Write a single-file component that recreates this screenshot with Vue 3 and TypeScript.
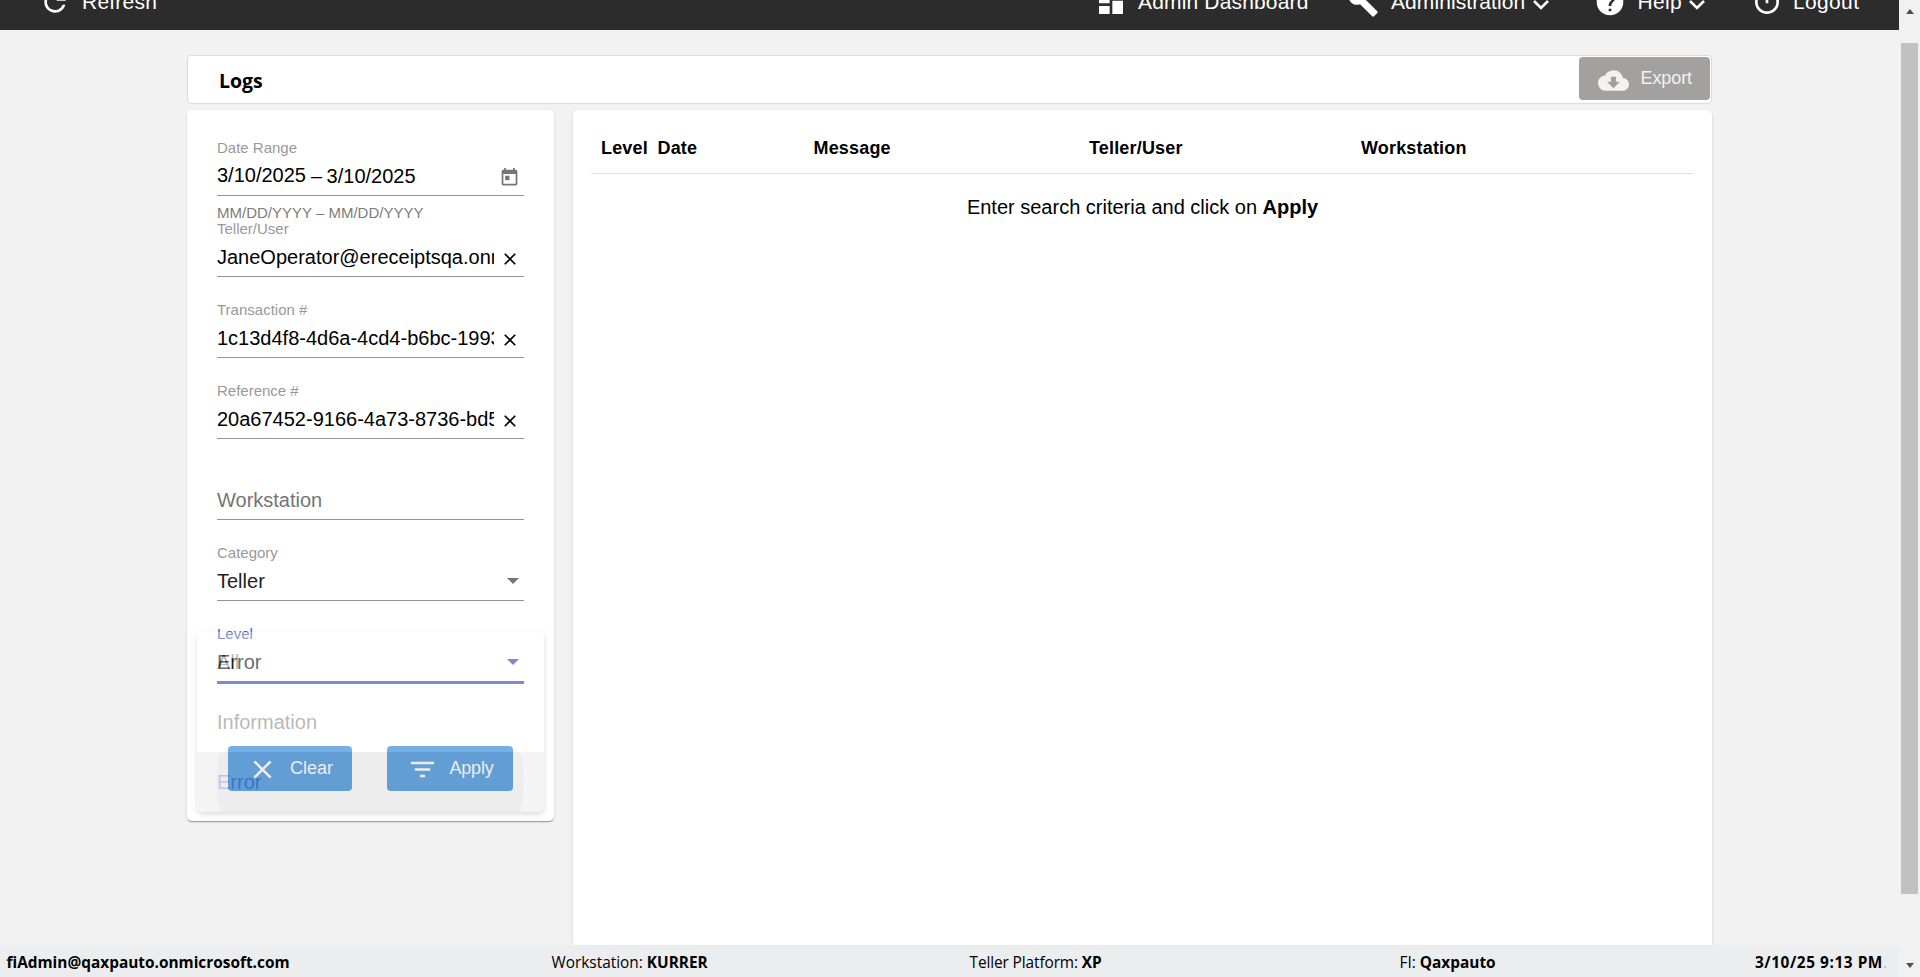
<script setup lang="ts">
interface Field {
  id: string
  label: string
  value: string
  kind: 'range' | 'text' | 'empty' | 'select'
  active?: boolean
}

const fields: Field[] = [
  { id: 'range', label: 'Date Range', value: '3/10/2025', kind: 'range' },
  { id: 'teller', label: 'Teller/User', value: 'JaneOperator@ereceiptsqa.onmicrosoft.com', kind: 'text' },
  { id: 'transaction', label: 'Transaction #', value: '1c13d4f8-4d6a-4cd4-b6bc-1993', kind: 'text' },
  { id: 'reference', label: 'Reference #', value: '20a67452-9166-4a73-8736-bd5', kind: 'text' },
  { id: 'workstation', label: '', value: 'Workstation', kind: 'empty' },
  { id: 'category', label: 'Category', value: 'Teller', kind: 'select' },
  { id: 'level', label: 'Level', value: 'Error', kind: 'select', active: true },
]

const columns: string[] = ['Level', 'Date', 'Message', 'Teller/User', 'Workstation']
const levels: string[] = ['All', 'Information', 'Error']
const selectedLevel = 'Error'
</script>

<template>
  <div class="window">
    <div class="page">
      <nav class="topbar">
        <a class="nav-item refresh">
          <svg class="nav-icon" viewBox="0 0 24 24"><path d="M17.65 6.35C16.2 4.9 14.21 4 12 4c-4.42 0-7.99 3.58-7.99 8s3.57 8 7.99 8c3.73 0 6.84-2.55 7.73-6h-2.08c-.82 2.33-3.04 4-5.65 4-3.31 0-6-2.69-6-6s2.69-6 6-6c1.66 0 3.14.69 4.22 1.78L13 11h7V4l-2.35 2.35z" /></svg>
          <span>Refresh</span>
        </a>
        <a class="nav-item dashboard">
          <svg class="nav-icon" viewBox="0 0 24 24"><path d="M3 13h8V3H3v10zm0 8h8v-6H3v6zm10 0h8V11h-8v10zm0-18v6h8V3h-8z" /></svg>
          <span>Admin Dashboard</span>
        </a>
        <a class="nav-item administration">
          <svg class="nav-icon" viewBox="0 0 24 24"><path d="M22.7 19l-9.1-9.1c.9-2.3.4-5-1.5-6.9-2-2-5-2.4-7.4-1.3L9 6 6 9 1.6 4.7C.4 7.1.9 10.1 2.9 12.1c1.9 1.9 4.6 2.4 6.9 1.5l9.1 9.1c.4.4 1 .4 1.4 0l2.3-2.3c.5-.4.5-1.1.1-1.4z" /></svg>
          <span>Administration</span>
          <svg class="chevron" viewBox="0 0 18 12"><path d="M2 2l7 7 7-7" /></svg>
        </a>
        <a class="nav-item help">
          <svg class="nav-icon" viewBox="0 0 24 24"><path d="M12 2C6.48 2 2 6.48 2 12s4.48 10 10 10 10-4.48 10-10S17.52 2 12 2zm1 17h-2v-2h2v2zm2.07-7.75l-.9.92C13.45 12.9 13 13.5 13 15h-2v-.5c0-1.1.45-2.1 1.17-2.83l1.24-1.26c.37-.36.59-.86.59-1.41 0-1.1-.9-2-2-2s-2 .9-2 2H8c0-2.21 1.79-4 4-4s4 1.79 4 4c0 .88-.36 1.68-.93 2.25z" /></svg>
          <span>Help</span>
          <svg class="chevron" viewBox="0 0 18 12"><path d="M2 2l7 7 7-7" /></svg>
        </a>
        <a class="nav-item logout">
          <svg class="nav-icon" viewBox="0 0 24 24"><path d="M13 3h-2v10h2V3zm4.83 2.17l-1.42 1.42C17.99 7.86 19 9.81 19 12c0 3.87-3.13 7-7 7s-7-3.13-7-7c0-2.19 1.01-4.14 2.58-5.42L6.17 5.17C4.23 6.82 3 9.26 3 12c0 4.97 4.03 9 9 9s9-4.03 9-9c0-2.74-1.23-5.18-3.17-6.83z" /></svg>
          <span>Logout</span>
        </a>
      </nav>

      <main class="content">
        <header class="title-bar">
          <h1>Logs</h1>
          <button class="export">
            <svg viewBox="0 0 24 24"><path d="M19.35 10.04C18.67 6.59 15.64 4 12 4 9.11 4 6.6 5.64 5.35 8.04 2.34 8.36 0 10.91 0 14c0 3.31 2.69 6 6 6h13c2.76 0 5-2.24 5-5 0-2.64-2.05-4.78-4.65-4.96zM17 13l-5 5-5-5h3V9h4v4h3z" /></svg>
            <span>Export</span>
          </button>
        </header>

        <div class="columns">
          <aside class="card filters">
            <template v-for="f in fields" :key="f.id">
              <div class="field" :class="[f.kind, { active: f.active }]">
                <label>{{ f.label }}</label>
                <div class="control">
                  <div v-if="f.kind === 'range'" class="value range-value">
                    <span class="start">{{ f.value }}</span><span class="dash">–</span><span>{{ f.value }}</span>
                  </div>
                  <div v-else class="value">{{ f.value }}</div>
                  <svg v-if="f.kind === 'range'" class="calendar" viewBox="0 0 24 24"><path d="M19 3h-1V1h-2v2H8V1H6v2H5c-1.11 0-1.99.9-1.99 2L3 19c0 1.1.89 2 2 2h14c1.1 0 2-.9 2-2V5c0-1.1-.9-2-2-2zm0 16H5V8h14v11zM7 10h5v5H7z" /></svg>
                  <svg v-if="f.kind === 'text'" class="reset" viewBox="0 0 24 24"><path d="M19 6.41L17.59 5 12 10.59 6.41 5 5 6.41 10.59 12 5 17.59 6.41 19 12 13.41 17.59 19 19 17.59 13.41 12z" /></svg>
                  <i v-if="f.kind === 'select'" class="arrow"></i>
                </div>
              </div>
              <div v-if="f.kind === 'range'" class="hint">MM/DD/YYYY – MM/DD/YYYY</div>
            </template>
            <div class="actions">
              <button class="action clear">
                <svg viewBox="0 0 24 24"><path d="M19 6.41L17.59 5 12 10.59 6.41 5 5 6.41 10.59 12 5 17.59 6.41 19 12 13.41 17.59 19 19 17.59 13.41 12z" /></svg>
                <span>Clear</span>
              </button>
              <button class="action apply">
                <svg viewBox="0 0 24 24"><path d="M10 18h4v-2h-4v2zM3 6v2h18V6H3zm3 7h12v-2H6v2z" /></svg>
                <span>Apply</span>
              </button>
            </div>
            <!-- level options, part-way through the fade -->
            <div class="menu">
              <div v-for="l in levels" :key="l" class="option" :class="{ selected: l === selectedLevel }">{{ l }}</div>
            </div>
          </aside>

          <section class="card results">
            <div class="head">
              <span v-for="c in columns" :key="c">{{ c }}</span>
            </div>
            <p class="empty-text">Enter search criteria and click on <b>Apply</b></p>
          </section>
        </div>
      </main>

      <footer class="status">
        <span><b>fiAdmin@qaxpauto.onmicrosoft.com</b></span>
        <span>Workstation: <b>KURRER</b></span>
        <span class="platform">Teller Platform: <b>XP</b></span>
        <span>FI: <b>Qaxpauto</b></span>
        <span class="time"><b>3/10/25 9:13 PM</b><span class="dot">.</span></span>
      </footer>
    </div>

    <div class="scrollbar">
      <i class="up"></i>
      <div class="thumb"></div>
      <i class="down"></i>
    </div>
  </div>
</template>

<style>
html, body { overflow: hidden; }
</style>

<style scoped>
* { box-sizing: border-box; }
.window {
  display: flex;
  width: 1920px;
  height: 977px;
  overflow: hidden;
  background: #f2f2f2;
  color: #000;
  font-family: "Liberation Sans", Arial, sans-serif;
  font-size: 20px;
}
.page { display: flex; flex-direction: column; width: 1899px; height: 977px; }

.topbar {
  display: flex;
  flex: none;
  align-items: flex-start;
  height: 44px;
  margin-top: -14px;
  background: #2c2c2c;
  color: #fff;
}
.nav-item { display: flex; flex: none; white-space: nowrap; line-height: 32px; font-size: 21px; }
.nav-icon { flex: none; width: 32px; height: 32px; fill: #fff; }
.nav-item span { margin-left: 10px; }
.chevron { flex: none; width: 18px; height: 12px; margin: 13px 0 0 6.5px; fill: none; stroke: #fff; stroke-width: 2.6; }
.refresh { width: 1056px; padding-left: 39px; letter-spacing: 0.22px; }
.dashboard { width: 291px; padding-left: 39px; letter-spacing: 0.16px; }
.administration { width: 247px; letter-spacing: 0.08px; }
.help { width: 157px; letter-spacing: 0.3px; }
.logout { letter-spacing: 0.35px; }
.refresh span { margin-left: 11px; }
.dashboard span { margin-left: 11px; }
.help span { margin-left: 11.5px; }
.administration span { margin-left: 12px; }

.content { flex: 1; min-height: 0; width: 1525px; margin-left: 187px; padding-top: 25px; }
.title-bar {
  display: flex;
  justify-content: space-between;
  height: 49px;
  padding: 1px 1px 0 31px;
  border: 1px solid #dcdcdc;
  border-radius: 4px;
  background: #fff;
}
h1 { margin: 8px 0 0; font: 700 19.5px/32px "Segoe UI", "Open Sans", "Noto Sans", sans-serif; }
.export, .action {
  display: flex;
  align-items: flex-start;
  border: 0;
  padding: 0;
  border-radius: 4px;
  font-family: inherit;
  font-size: 18px;
  line-height: 24px;
  color: #fff;
}
.export { width: 131px; height: 43px; padding: 8px 0 0 19px; background: #a3a19f; color: #f2f2f2; }
.export svg { width: 31px; height: 31px; fill: #f2f2f2; }
.export span { margin: 1px 0 0 11.5px; letter-spacing: -0.1px; }

.columns { display: flex; gap: 19px; margin-top: 6px; height: 900px; align-items: flex-start; }
.card {
  background: #fff;
  border-radius: 5px;
  box-shadow: 0 2px 1px -1px rgba(0, 0, 0, 0.2), 0 1px 1px rgba(0, 0, 0, 0.14), 0 1px 3px rgba(0, 0, 0, 0.12);
}
.filters { position: relative; width: 367px; height: 711px; padding: 5px 30px 0; }
.results { width: 1139px; height: 900px; padding: 0 18px; }

.field { height: 81px; padding-top: 23px; border-bottom: 1px solid #949494; white-space: nowrap; }
.field label { display: block; height: 20px; line-height: 20px; font-size: 15px; color: #999; }
.control { display: flex; height: 36px; padding-top: 6px; justify-content: space-between; }
.value { flex: 1; overflow: hidden; line-height: 24px; }
.text .value { flex: 0 0 277px; }
.empty .value { color: #757575; }
.select .value { color: #212121; }
.range-value { display: flex; }
.range-value .start { margin-top: -1px; }
.range-value .dash { margin: 0 4.5px 0 5px; }
.calendar { width: 21px; height: 21px; margin: 3px 4.5px 0 0; fill: #757575; }
.reset { width: 20px; height: 20px; margin: 4px 4.5px 0 0; }
.arrow { margin: 9px 5px 0 0; height: 6px; border: 6px solid transparent; border-top-color: #757575; border-bottom: 0; }
.hint { height: 27px; margin-bottom: -27px; padding-top: 7px; font-size: 15px; line-height: 20px; color: #7c7c7c; }
.active { height: 83px; border-bottom: 3px solid #3f51b5; }
.active label { color: #4d5dbb; }
.active .arrow { border-top-color: #3f51b5; }

.actions { display: flex; gap: 35px; padding: 62px 0 0 11px; }
.action { height: 45px; background: #3089da; }
.action svg { width: 31px; height: 31px; fill: #fff; margin-top: 8px; }
.action span { margin: 10px 0 0 12px; }
.clear { width: 124px; padding-left: 19px; }
.apply { width: 126px; padding-left: 19.5px; letter-spacing: -0.2px; }

.menu {
  position: absolute;
  left: 10px;
  top: 522px;
  width: 347px;
  height: 180px;
  border-radius: 5px;
  background: #fff;
  opacity: 0.33;
  box-shadow: 0 2px 4px -1px rgba(0, 0, 0, 0.2), 0 4px 5px rgba(0, 0, 0, 0.14), 0 1px 10px rgba(0, 0, 0, 0.12);
}
.option { height: 60px; padding-left: 20px; line-height: 60px; color: rgba(0, 0, 0, 0.87); }
.selected {
  border-radius: 0 0 5px 5px;
  color: #3f51b5;
  background: radial-gradient(circle 154px at 173px 30px, rgba(0, 0, 0, 0.1) 153px, transparent 154px), rgba(0, 0, 0, 0.12);
}

.head {
  display: grid;
  grid-template-columns: 56.5px 156px 275.5px 272px 1fr;
  height: 64px;
  padding: 26px 0 0 10px;
  border-bottom: 1px solid #e0e0e0;
  font-size: 18px;
  font-weight: 700;
  letter-spacing: 0.17px;
  line-height: 24px;
}
.empty-text { margin: 21px 0 0; text-align: center; line-height: 24px; }

.status {
  display: grid;
  grid-template-columns: 545px 418px 430px 355.5px 1fr;
  flex: none;
  position: relative;
  height: 32px;
  padding-left: 6.5px;
  background: #ecedef;
  font: 15.4px/35px "Segoe UI", "Open Sans", "Noto Sans", sans-serif;
  white-space: nowrap;
}
.platform { letter-spacing: -0.1px; }
.time { letter-spacing: 0.55px; }
.dot { color: #bbb; }

.scrollbar { display: flex; flex-direction: column; align-items: center; width: 21px; background: #f1f1f1; }
.up, .down { border: 4.5px solid transparent; }
.up { margin-top: 9px; border-top: 0; border-bottom: 5px solid #505050; }
.thumb { width: 17px; height: 851px; margin-top: 29px; background: #c1c1c1; }
.down { margin-top: 69px; border-bottom: 0; border-top: 5px solid #505050; }
</style>
